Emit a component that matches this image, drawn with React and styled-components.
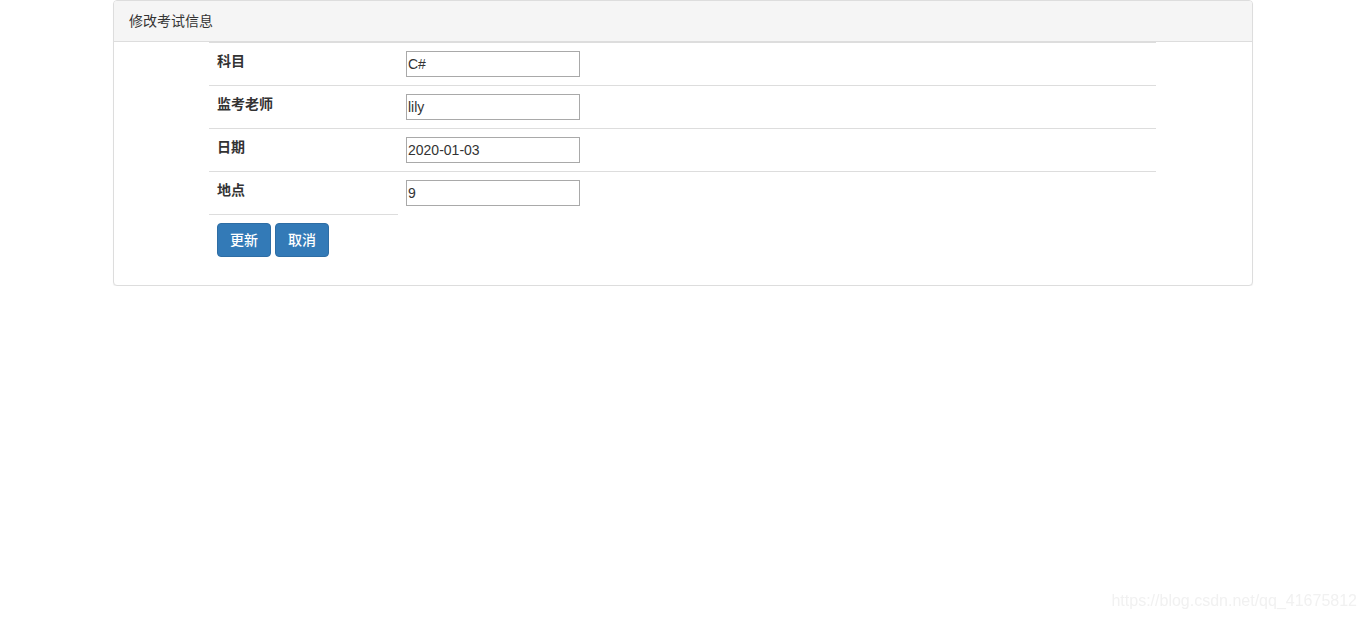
import styled, { createGlobalStyle } from "styled-components";

const GlobalStyle = createGlobalStyle`
  body {
    margin: 0;
    font-family: "Liberation Sans", "Noto Sans CJK SC", Arial, sans-serif;
    font-size: 14px;
    line-height: 1.42857143;
    color: #333;
    background-color: #fff;
  }
  * {
    box-sizing: border-box;
  }
`;

const Container = styled.div`
  width: 1170px;
  padding: 0 15px;
  margin: 0 auto;
`;

const Panel = styled.div`
  border: 1px solid #ddd;
  border-radius: 4px;
  background-color: #fff;
  box-shadow: 0 1px 1px rgba(0, 0, 0, 0.05);
`;

const PanelHeading = styled.div`
  padding: 10px 15px;
  background-color: #f5f5f5;
  border-bottom: 1px solid #ddd;
  border-radius: 3px 3px 0 0;
  color: #333;
`;

const Table = styled.table`
  width: 947px;
  margin: 0 0 20px 95px;
  border-collapse: collapse;
  border-spacing: 0;
`;

const Row = styled.tr``;

const Cell = styled.td`
  padding: 8px;
  line-height: 20px;
  vertical-align: top;
  border-top: 1px solid #ddd;
  width: ${({ $width }) => ($width ? `${$width}px` : "auto")};
`;

const Label = styled.strong`
  font-weight: bold;
`;

const Input = styled.input`
  display: block;
  width: 174px;
  height: 26px;
  padding: 1px 2px 1px 1px;
  border: 1px solid #a9a9a9;
  font-family: "Liberation Sans", "Noto Sans CJK SC", Arial, sans-serif;
  font-size: 14px;
  color: #333;
  background: #fff;
  outline: none;
`;

const ButtonBar = styled.div`
  display: flex;
  gap: 4px;
`;

const Button = styled.button`
  display: inline-block;
  padding: 6px 12px;
  font-family: "Liberation Sans", "Noto Sans CJK SC", Arial, sans-serif;
  font-size: 14px;
  font-weight: 500;
  line-height: 20px;
  color: #fff;
  background-color: #337ab7;
  border: 1px solid #2e6da4;
  border-radius: 4px;
  cursor: pointer;
  &:hover {
    background-color: #286090;
    border-color: #204d74;
  }
`;

const Watermark = styled.div`
  position: fixed;
  right: 9px;
  bottom: 6px;
  font-family: "Liberation Sans", Arial, sans-serif;
  font-size: 16px;
  color: #f1f1f1;
  pointer-events: none;
`;

const fields = [
  { label: "科目", value: "C#" },
  { label: "监考老师", value: "lily" },
  { label: "日期", value: "2020-01-03" },
  { label: "地点", value: "9" },
];

export default function App() {
  return (
    <>
      <GlobalStyle />
      <Container>
        <Panel>
          <PanelHeading>修改考试信息</PanelHeading>
          <Table>
            <tbody>
              {fields.map((field) => (
                <Row key={field.label}>
                  <Cell $width={189}>
                    <Label>{field.label}</Label>
                  </Cell>
                  <Cell>
                    <Input type="text" defaultValue={field.value} />
                  </Cell>
                </Row>
              ))}
              <Row>
                <Cell $width={189}>
                  <ButtonBar>
                    <Button type="button">更新</Button>
                    <Button type="button">取消</Button>
                  </ButtonBar>
                </Cell>
              </Row>
            </tbody>
          </Table>
        </Panel>
      </Container>
      <Watermark>https://blog.csdn.net/qq_41675812</Watermark>
    </>
  );
}
